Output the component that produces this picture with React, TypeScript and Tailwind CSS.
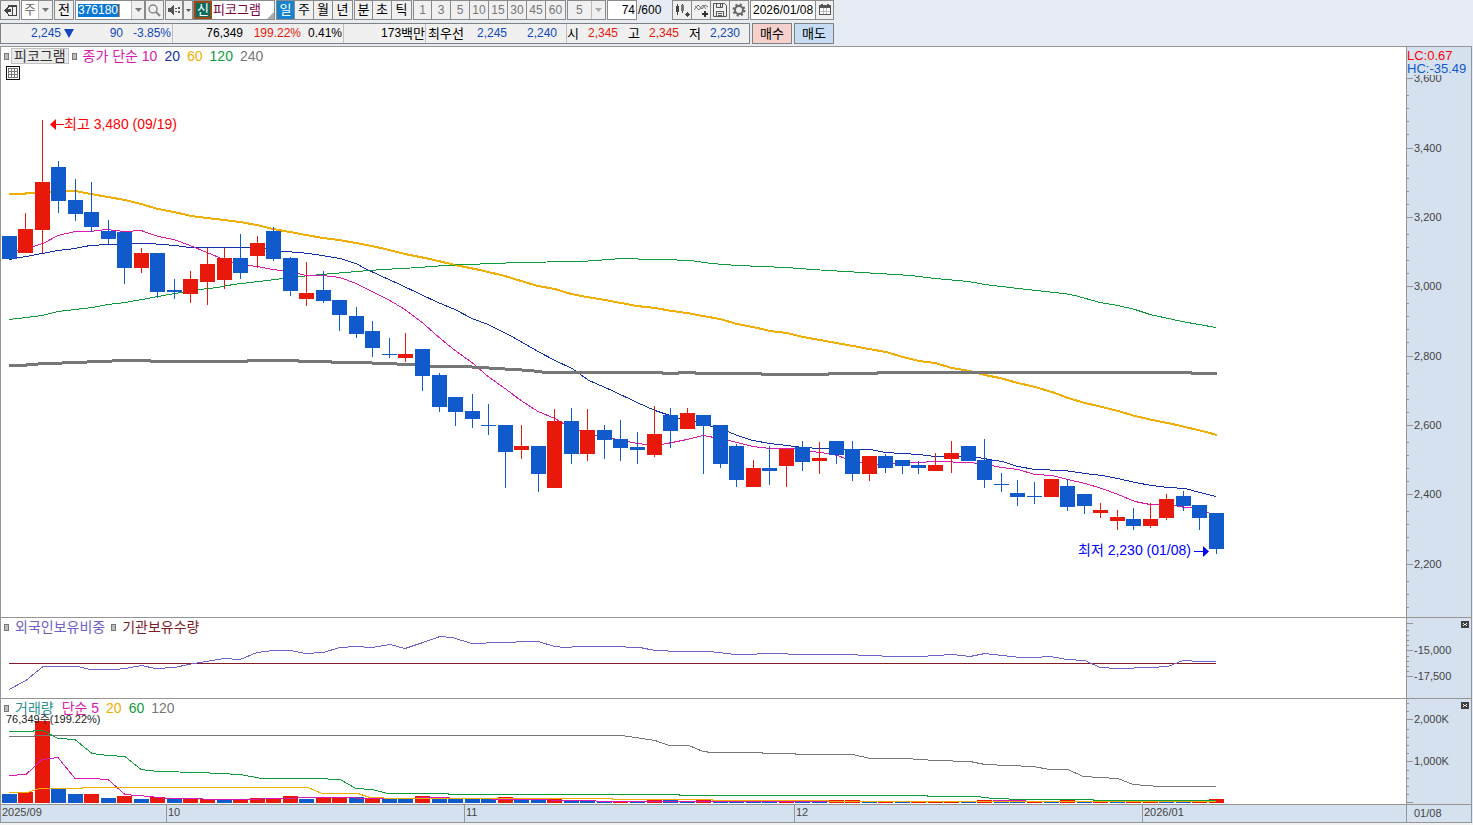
import React, { useState } from 'react';

type Candle = {
  up: boolean;
  high: number;
  top: number;
  bottom: number;
  low: number;
};

const UP = '#e8190a';
const DOWN = '#115acb';
const AXIS = '#959595';

const STEP = 16.54;
const candleX = (i: number) => Math.floor(9 + i * STEP);

// colour, high, body top, body bottom, low
const rawCandles: [string, number, number, number, number][] = [
  ['d', 236, 236, 259, 259], ['u', 213, 229, 253, 253], ['u', 120, 182, 230, 253], ['d', 161, 167, 201, 213],
  ['d', 179, 200, 214, 221], ['d', 182, 212, 227, 232], ['d', 220, 231, 239, 244], ['d', 232, 232, 268, 284],
  ['u', 248, 253, 268, 273], ['d', 253, 253, 292, 298], ['d', 279, 290, 292, 299], ['u', 271, 279, 294, 303],
  ['u', 248, 264, 282, 305], ['u', 248, 258, 280, 289], ['d', 234, 258, 273, 279], ['u', 236, 243, 256, 268],
  ['d', 227, 231, 259, 261], ['d', 257, 258, 291, 296], ['u', 262, 293, 299, 306], ['d', 271, 290, 301, 303],
  ['d', 300, 300, 315, 331], ['d', 307, 316, 334, 338], ['d', 321, 331, 348, 357], ['d', 338, 354, 355, 358],
  ['u', 333, 354, 358, 362], ['d', 349, 349, 376, 391], ['d', 373, 375, 407, 412], ['d', 397, 397, 412, 426],
  ['d', 394, 411, 419, 428], ['d', 404, 425, 426, 435], ['d', 425, 425, 452, 488], ['u', 425, 446, 450, 459],
  ['d', 446, 446, 474, 492], ['u', 409, 421, 488, 488], ['d', 408, 421, 454, 464], ['u', 409, 430, 454, 461],
  ['d', 425, 430, 440, 459], ['d', 420, 439, 448, 461], ['d', 432, 447, 450, 464], ['u', 406, 434, 455, 457],
  ['d', 408, 415, 431, 448], ['u', 408, 413, 429, 429], ['d', 415, 415, 426, 474], ['d', 425, 425, 464, 468],
  ['d', 444, 446, 480, 487], ['u', 460, 468, 487, 487], ['d', 446, 468, 471, 485], ['u', 449, 449, 466, 487],
  ['d', 441, 447, 462, 471], ['u', 442, 458, 461, 474], ['d', 441, 441, 455, 464], ['d', 441, 449, 474, 481],
  ['u', 456, 456, 474, 481], ['d', 454, 456, 468, 473], ['d', 460, 460, 466, 474], ['d', 461, 465, 468, 474],
  ['u', 453, 465, 471, 471], ['u', 441, 453, 459, 473], ['d', 446, 446, 461, 461], ['d', 439, 460, 480, 488],
  ['d', 473, 484, 485, 492], ['d', 480, 493, 497, 506], ['d', 482, 496, 497, 504], ['u', 479, 479, 497, 497],
  ['d', 479, 486, 507, 511], ['d', 494, 494, 506, 514], ['u', 503, 510, 513, 518], ['u', 510, 517, 521, 530],
  ['d', 508, 519, 526, 530], ['u', 503, 519, 526, 528], ['u', 494, 499, 518, 520], ['d', 491, 496, 506, 511],
  ['d', 505, 505, 518, 530], ['d', 513, 513, 549, 554],
];

const candles: Candle[] = rawCandles.map(([c, high, top, bottom, low]) => ({
  up: c === 'u',
  high,
  top,
  bottom,
  low,
}));

const volumeTops = [
  794, 792, 721, 789, 794, 794, 798, 796, 799, 797, 799, 799, 799, 799, 799, 798, 798, 796, 799,
  797, 797, 797, 799, 799, 799, 796, 798, 799, 799, 799, 797, 799, 799, 799, 801, 801, 801, 801,
  801, 800, 800, 801, 800, 801, 801, 801, 801, 801, 801, 801, 800, 800, 802, 802, 802, 802, 802,
  802, 802, 800, 802, 802, 802, 802, 800, 802, 802, 802, 802, 802, 802, 802, 802, 799,
];

// days on which the volume rose
const volumeUpDays = [
  1, 2, 5, 7, 9, 11, 12, 14, 15, 16, 17, 19, 20, 22, 25, 30, 33, 37, 39, 42, 47, 50, 51, 53, 55,
  56, 57, 59, 62, 64, 66, 68, 69, 72, 73,
];

const priceLines = [
  {
    color: '#f0ae00',
    width: 2,
    points:
      '9,194 25,194 26,193 50,192 62,191 75,191 91,194 108,197 125,200 141,204 158,209 174,212 191,216 207,218 224,220 240,222 257,225 273,229 290,232 306,235 323,238 339,240 356,243 372,246 389,250 405,254 430,259 455,265 480,270 488,272 505,276 521,281 538,286 555,289 571,294 587,297 605,300 621,303 637,306 655,308 672,311 687,313 703,316 720,319 737,324 753,327 770,331 787,333 803,337 820,340 853,346 869,349 886,352 903,357 919,361 935,363 952,368 970,371 985,375 1000,378 1018,383 1035,387 1052,392 1068,398 1085,403 1102,407 1118,411 1135,416 1152,420 1168,423 1185,427 1202,431 1217,435',
  },
  {
    color: '#0f9b3c',
    width: 1,
    points:
      '9,319 26,317 42,315 58,311 75,309 92,307 108,304 125,302 142,299 158,296 175,293 200,289 218,287 233,284 250,282 267,280 283,278 310,275 333,273 357,271 383,269 420,267 430,266 464,264 497,263 515,262 580,261 596,260 621,258 655,259 663,259 690,260 712,263 737,265 762,266 786,267 812,269 862,272 911,275 935,278 968,281 985,284 1018,288 1064,293 1075,295 1100,302 1118,305 1135,309 1150,314 1182,321 1216,327',
  },
  {
    color: '#1430a8',
    width: 1,
    points:
      '9,259 26,256 42,253 58,250 75,248 90,245 108,244 125,244 132,243 150,243 175,245 190,247 248,247 270,248 283,251 300,252 316,254 340,258 356,263 365,268 380,275 400,284 421,294 438,302 455,309 472,318 488,324 512,336 538,351 555,360 572,368 589,380 612,390 637,402 655,410 670,415 680,418 700,422 712,426 728,431 737,435 753,440 770,443 787,445 803,447 820,448 850,449 870,449 886,452 919,454 935,456 968,456 978,457 995,460 1002,461 1018,466 1035,469 1065,470 1085,473 1102,475 1118,478 1135,482 1152,485 1168,487 1185,488 1200,492 1216,496',
  },
  {
    color: '#d81ab0',
    width: 1,
    points:
      '9,252 33,246 43,243 58,235 75,231 90,231 106,229 125,231 141,230 158,236 174,239 190,245 207,252 224,259 240,264 257,266 273,269 290,271 306,275 323,275 340,277 356,283 372,291 388,299 405,309 421,321 438,336 455,350 472,362 488,376 505,388 521,400 538,411 555,418 570,427 590,434 612,438 628,441 637,443 655,445 662,444 672,442 687,439 703,435 720,438 737,442 753,446 770,448 787,448 803,449 812,451 828,453 838,455 845,458 862,462 880,464 900,463 935,461 970,462 985,464 1002,467 1018,469 1035,474 1052,475 1068,479 1085,483 1102,488 1118,494 1135,501 1150,504 1170,504 1185,507 1200,508 1210,513 1216,516',
  },
  {
    color: '#777777',
    width: 3,
    points:
      '9,365 26,365 27,364 50,363 75,362 100,361 125,360 150,360 151,361 247,361 248,360 298,360 299,361 331,361 332,362 364,362 380,363 413,364 430,366 463,366 480,367 497,368 513,369 530,370 546,372 662,372 663,373 678,373 679,372 695,372 696,373 761,373 762,374 828,374 829,373 877,373 878,372 1191,372 1192,373 1217,373',
  },
];

const holdingLines = [
  { color: '#801c28', width: 1, points: '9,663 1216,663' },
  {
    color: '#7060c8',
    width: 1,
    points:
      '9,689 26,680 43,666 78,666 90,669 115,669 125,668 142,665 155,668 175,667 188,664 200,662 224,658 240,659 257,652 273,650 290,650 306,653 323,652 340,647 356,646 372,647 390,644 405,648 423,642 440,636 452,637 472,643 478,643 495,642 538,641 555,646 565,647 580,646 612,646 640,647 655,650 680,651 710,651 735,654 780,653 795,654 845,654 870,655 894,656 920,656 952,654 970,656 985,653 1002,655 1020,657 1035,657 1050,656 1067,659 1085,660 1100,667 1118,668 1150,667 1168,666 1183,660 1200,661 1216,661',
  },
];

const volumeLines = [
  {
    color: '#777777',
    width: 1,
    points:
      '9,736 34,736 35,735 622,735 655,740 669,745 689,745 703,751 712,752 762,752 763,753 795,753 796,754 853,754 870,758 905,758 935,760 970,761 985,764 1033,766 1050,769 1068,769 1083,776 1118,778 1133,784 1160,786 1216,786',
  },
  {
    color: '#0f9b3c',
    width: 1,
    points:
      '9,731 33,731 34,730 43,730 58,738 75,739 92,753 108,755 125,756 141,769 158,771 200,772 240,774 262,778 315,778 340,779 356,788 372,789 388,793 448,793 449,794 679,794 680,795 927,795 928,796 977,796 993,798 1025,799 1093,799 1094,800 1216,800',
  },
  {
    color: '#d81ab0',
    width: 1,
    points:
      '9,775 26,774 42,759 58,757 75,778 92,778 108,779 125,794 150,796 166,798 240,799 315,797 398,798 440,797 460,798 580,800 612,801 993,801 994,800 1025,800 1026,801 1216,801',
  },
  {
    color: '#f0ae00',
    width: 1,
    points:
      '9,792 27,792 40,788 82,788 83,787 308,787 322,793 358,793 370,797 398,798 612,798 613,799 712,799 713,800 828,800 829,801 1216,801',
  },
];

type Tick = { y: number; label?: string };

const priceLabels: [number, string][] = [
  [78, '3,600'], [148, '3,400'], [217, '3,200'], [286, '3,000'],
  [356, '2,800'], [425, '2,600'], [494, '2,400'], [564, '2,200'],
];
const priceTicks: Tick[] = priceLabels.flatMap(([y, label]) => [
  { y, label },
  ...[17, 30, 43, 56].filter((d) => y + d < 615).map((d) => ({ y: y + d })),
]);

const holdingTicks: Tick[] = [
  { y: 623, label: '' }, { y: 630 }, { y: 635 }, { y: 640 }, { y: 645 }, { y: 650, label: '-15,000' },
  { y: 656 }, { y: 661 }, { y: 666 }, { y: 671 }, { y: 676, label: '-17,500' },
];

const volumeTicks: Tick[] = [
  { y: 703 }, { y: 711 }, { y: 719, label: '2,000K' }, { y: 729 }, { y: 737 }, { y: 745 }, { y: 753 },
  { y: 761, label: '1,000K' }, { y: 770 }, { y: 778 }, { y: 786 }, { y: 794 }, { y: 802, label: '' },
];

const months: [number, string][] = [
  [166, '10'], [464, '11'], [794, '12'], [1142, '2026/01'],
];

const Lines: React.FC<{ lines: typeof priceLines }> = ({ lines }) => (
  <>
    {lines.map((line) => (
      <polyline
        key={line.color}
        points={line.points}
        fill="none"
        stroke={line.color}
        strokeWidth={line.width}
        transform={line.width === 2 ? undefined : 'translate(0 0.5)'}
        shapeRendering="crispEdges"
      />
    ))}
  </>
);

const Axis: React.FC<{ ticks: Tick[]; top: number; children?: React.ReactNode }> = ({
  ticks,
  top,
  children,
}) => (
  <div className="relative w-[66px] shrink-0 border-x border-[#959595] bg-[#d6e1ef]">
    <svg className="absolute inset-0 h-full w-full" aria-hidden="true">
      <g transform={`translate(0 ${-top})`}>
        {ticks.map((tick) => (
          <g key={tick.y}>
            <rect x="0" y={tick.y} width={tick.label === undefined ? 2 : 6} height="1" fill={AXIS} />
            {tick.label && (
              <text x="7" y={tick.y + 4} fontSize="11" fill="#444444">
                {tick.label}
              </text>
            )}
          </g>
        ))}
      </g>
    </svg>
    {children}
  </div>
);

const CloseButton: React.FC<{ label: string }> = ({ label }) => (
  <button
    aria-label={label}
    className="absolute right-[2px] top-[3px] flex h-[7px] w-2 items-center justify-center bg-[#404040]"
  >
    <svg width="4" height="3" shapeRendering="crispEdges">
      <path d="M0 0h1v1h-1zM3 0h1v1h-1zM1 1h2v1h-2zM0 2h1v1h-1zM3 2h1v1h-1z" fill="#fff" />
    </svg>
  </button>
);

const Marker = () => <span className="h-[7px] w-[5px] border border-[#777] bg-[#bbb]" />;

const ToolButton: React.FC<{
  label?: string;
  className: string;
  children: React.ReactNode;
}> = ({ label, className, children }) => (
  <button
    aria-label={label}
    className={`flex h-5 items-center justify-center border border-[#8a8a8a] bg-[#f0f0f0] ${className}`}
  >
    {children}
  </button>
);

const Arrow: React.FC<{ color?: string }> = ({ color = '#777' }) => (
  <svg width="7" height="4" aria-hidden="true">
    <path d="M0 0h7L3.500 4z" fill={color} />
  </svg>
);

const Segments: React.FC<{
  items: string[];
  active?: string;
  muted?: boolean;
  onSelect: (item: string) => void;
}> = ({ items, active, muted, onSelect }) => (
  <div className="flex h-5 divide-x divide-[#8a8a8a] border border-[#8a8a8a]">
    {items.map((item) => (
      <button
        key={item}
        onClick={() => onSelect(item)}
        className={`w-[19px] text-center first:w-[18px] ${
          muted ? 'text-[12px] text-[#777]' : 'text-[13px]'
        } ${item === active ? 'bg-[#1583cd] text-white' : 'bg-[#f0f0f0]'}`}
      >
        {item}
      </button>
    ))}
  </div>
);

const Toolbar = () => {
  const [period, setPeriod] = useState('일');
  return (
    <div className="flex h-5 items-center text-[12px] leading-[18px] text-black">
      <ToolButton label="패널 열기" className="w-5">
        <svg width="13" height="13" shapeRendering="crispEdges">
          <path d="M4 1h9v2H4zM4 11h9v1H4zM12 1h1v11h-1zM8 3h1v8H8zM4 3h1v1H4zM4 10h1v1H4z" fill="#444" />
          <path d="M0 6h1v1H0zM1 5h1v3H1zM2 4h1v5H2zM3 3h1v7H3zM4 5h3v3H4z" fill="#444" />
        </svg>
      </ToolButton>
      <label className="relative ml-px flex h-5 w-8 border border-[#8a8a8a] bg-white">
        <select aria-label="구분" className="w-full appearance-none pl-[2px] text-[13px] text-[#666]">
          <option>주</option>
        </select>
        <span className="pointer-events-none absolute inset-y-0 right-0 flex w-3.5 items-center justify-center border-l border-[#bbb] bg-[#f0f0f0]">
          <Arrow />
        </span>
      </label>
      <ToolButton className="ml-px w-5 text-[13px]">전</ToolButton>
      <div className="ml-px flex h-5 w-[70px] border border-[#8a8a8a] bg-white">
        <div className="flex flex-1 items-center px-[2px]">
          <input
            aria-label="종목코드"
            defaultValue="376180"
            className="h-[13px] w-[42px] border-r border-[#f08020] bg-[#0a78d7] text-white outline-none"
          />
        </div>
        <button aria-label="종목 목록" className="flex w-[13px] items-center justify-center border-l border-[#bbb] bg-[#f0f0f0]">
          <Arrow />
        </button>
      </div>
      <ToolButton label="검색" className="w-[19px]">
        <svg width="13" height="13" fill="none" stroke="#888">
          <circle cx="5" cy="5" r="4" strokeWidth="1.500" />
          <path d="M8 8l4 4" strokeWidth="2" />
        </svg>
      </ToolButton>
      <ToolButton label="소리" className="ml-px w-[18px]">
        <svg width="13" height="12" shapeRendering="crispEdges" fill="#555">
          <path d="M0 4h3V8H0zM3 3h1v6H3zM4 2h1v8H4zM5 1h1v10H5zM7 4h2v1H7zM7 7h2v1H7zM10 3h2v2h-2zM10 7h2v2h-2z" />
        </svg>
      </ToolButton>
      <ToolButton label="소리 설정" className="w-[10px]">
        <svg width="5" height="3">
          <path d="M0 0h5L2.500 3z" fill="#555" />
        </svg>
      </ToolButton>
      <div className="flex h-5 w-[82px] border border-[#8a8a8a] bg-white text-[13px]">
        <span className="flex h-full w-[18px] items-center justify-center border-2 border-[#9a4a10] bg-[#0d6b60] text-white">
          신
        </span>
        <span className="pl-px text-[#7a0040]">피코그램</span>
        <svg className="ml-auto self-end" width="7" height="7" aria-hidden="true">
          <path d="M7 0v7H0z" fill="#aaa" />
        </svg>
      </div>
      <div className="ml-px flex">
        <Segments items={['일', '주', '월', '년']} active={period} onSelect={setPeriod} />
        <div className="w-px" />
        <Segments items={['분', '초', '틱']} active={period} onSelect={setPeriod} />
        <div className="w-px" />
        <Segments items={['1', '3', '5', '10', '15', '30', '45', '60']} active={period} muted onSelect={setPeriod} />
      </div>
      <label className="relative ml-px flex h-5 w-[39px] border border-[#8a8a8a] bg-[#f0f0f0]">
        <select aria-label="분 단위" className="w-full appearance-none pl-2 text-[#777]">
          <option>5</option>
        </select>
        <span className="pointer-events-none absolute inset-y-0 right-0 flex w-3.5 items-center justify-center border-l border-[#bbb]">
          <Arrow color="#aaa" />
        </span>
      </label>
      <input
        aria-label="표시 개수"
        defaultValue="74"
        className="ml-px h-5 w-[30px] border border-[#8a8a8a] bg-white pr-px text-right outline-none"
      />
      <span className="ml-px w-[34px]">/600</span>
      <ToolButton label="차트 추가" className="w-5">
        <svg width="15" height="15" shapeRendering="crispEdges" fill="#444">
          <path d="M2 1h1v11H2zM1 3h3v6H1zM7 1h1v9H7z" />
          <path d="M6 2h3v6H6z" fill="#777" />
          <path d="M12 9h1v5h-1zM10 11h5v1h-5zM11 10h3v3h-3z" />
        </svg>
      </ToolButton>
      <ToolButton label="지표 추가" className="-ml-px w-5">
        <svg width="15" height="15" fill="none" stroke="#777">
          <path d="M0 7L4 2l4 4 3-4 3 2M1 3l4 4 4-5 3 4" />
          <path d="M8 11h6M11 8v6" stroke="#333" strokeWidth="2" />
        </svg>
      </ToolButton>
      <ToolButton label="저장" className="-ml-px w-5">
        <svg width="14" height="14" fill="none" stroke="#555">
          <path d="M.5.5h11l2 2v11H.5zM3.500.5v4h6v-4M7.500 1v3M3.500 13.500v-5h7v5M5 10.500h4M5 12.500h4" />
        </svg>
      </ToolButton>
      <ToolButton label="설정" className="-ml-px w-5">
        <svg width="14" height="14" fill="none" stroke="#666">
          <circle cx="7" cy="7" r="4" strokeWidth="2" />
          <circle cx="7" cy="7" r="5.500" strokeWidth="2" strokeDasharray="2.160 2.160" />
        </svg>
      </ToolButton>
      <div className="ml-px flex h-5 w-[84px] border border-[#8a8a8a] bg-white">
        <input aria-label="조회일" defaultValue="2026/01/08" className="w-[64px] pl-[2px] outline-none" />
        <button aria-label="달력" className="flex flex-1 items-center justify-center border-l border-[#8a8a8a] bg-[#f0f0f0]">
          <svg width="12" height="12" shapeRendering="crispEdges">
            <path d="M0 1h12v10H0z" fill="#555" />
            <path d="M1 4h10v6H1z" fill="#fff" />
            <path d="M4 4h1v6H4zM7 4h1v6H7zM1 7h10v1H1z" fill="#bbb" />
            <path d="M2 0h2v2H2zM8 0h2v2H8z" fill="#555" />
          </svg>
        </button>
      </div>
    </div>
  );
};

const Quote: React.FC<{ label: string; value: string; color: string }> = ({ label, value, color }) => (
  <span className="flex w-[51px] justify-between">
    <span className="text-[13px]">{label}</span>
    <span className={color}>{value}</span>
  </span>
);

const QuoteBar = () => (
  <div className="mt-[3px] flex h-[21px] text-[12px] leading-[19px] text-black">
    <div className="flex border border-[#808080] bg-[#f0f0f0] text-right whitespace-nowrap">
      <div className="flex w-[172px] border-r border-[#c0c0c0] text-[#1048c0]">
        <span className="flex w-[73px] items-center justify-end gap-[3px]">
          2,245
          <svg width="10" height="9" role="img" aria-label="하락">
            <path d="M0 0h10L5 9z" fill="#1048c0" />
          </svg>
        </span>
        <span className="w-[49px]">90</span>
        <span className="w-12">-3.85%</span>
      </div>
      <div className="flex w-[171px] border-r border-[#c0c0c0]">
        <span className="w-[70px]">76,349</span>
        <span className="w-[58px] text-[#e8190a]">199.22%</span>
        <span className="w-[41px]">0.41%</span>
      </div>
      <div className="flex w-[82px] justify-end border-r border-[#c0c0c0]">
        173<span className="text-[13px]">백만</span>
      </div>
      <div className="flex w-[141px] border-r border-[#c0c0c0] pl-[2px] text-[#1048c0]">
        <span className="w-[37px] text-left text-[13px] text-black">최우선</span>
        <span className="w-[42px]">2,245</span>
        <span className="w-[50px]">2,240</span>
      </div>
      <div className="flex w-[182px] gap-[10px]">
        <Quote label="시" value="2,345" color="text-[#e8190a]" />
        <Quote label="고" value="2,345" color="text-[#e8190a]" />
        <Quote label="저" value="2,230" color="text-[#1048c0]" />
      </div>
    </div>
    <button className="ml-[2px] w-10 border border-[#808080] bg-[#f6d0ca] text-[13px]">매수</button>
    <button className="ml-[2px] w-10 border border-[#808080] bg-[#c6ddf3] text-[13px]">매도</button>
  </div>
);

const PricePanel = () => (
  <div className="flex min-h-[570px] flex-1">
    <div className="relative flex-1">
      <svg className="absolute inset-0 h-full w-full" role="img" aria-label="일봉 차트">
        <g transform="translate(-1 -47)">
          <Lines lines={priceLines} />
          <g shapeRendering="crispEdges">
            {candles.map((c, i) => {
              const x = candleX(i);
              return (
                <g key={i} fill={c.up ? UP : DOWN}>
                  <rect x={x} y={c.high} width="1" height={c.low - c.high} />
                  <rect x={x - 7} y={c.top} width="15" height={c.bottom - c.top} />
                </g>
              );
            })}
          </g>
          <path d="M50 124.500l6-5.500v5h8v1h-8v5z" fill="#ff0000" />
          <text x="64" y="129" fontSize="14" fill="#ff0000">
            최고 3,480 (09/19)
          </text>
          <text x="1078" y="555" fontSize="14" fill="#0000ff">
            최저 2,230 (01/08)
          </text>
          <path d="M1209 551.500l-6-5.500v5h-9v1h9v5z" fill="#0000ff" />
        </g>
      </svg>
      <div className="absolute left-[3px] top-px flex items-center text-[14px] leading-[14px]">
        <Marker />
        <span className="ml-[2px] border border-[#c0c0c0] bg-[#ebebeb] px-[2px] text-[#333]">피코그램</span>
        <span className="ml-[3px] flex">
          <Marker />
        </span>
        <span className="ml-[6px] text-[#d81ab0]">종가 단순 10</span>
        <span className="ml-[7px] text-[#1430a8]">20</span>
        <span className="ml-[7px] text-[#f0ae00]">60</span>
        <span className="ml-[7px] text-[#0f9b3c]">120</span>
        <span className="ml-[7px] text-[#777]">240</span>
      </div>
      <button aria-label="표 보기" className="absolute left-[5px] top-[19px]">
        <svg width="14" height="14" shapeRendering="crispEdges">
          <path d="M0 0h14v14H0z" fill="#111" />
          <path d="M1 1h12v12H1z" fill="#fff" />
          <path d="M2 2h10v10H2z" fill="#777" />
          <path d="M3 3h2v2H3zM6 3h2v2H6zM9 3h2v2H9zM3 6h2v2H3zM6 6h2v2H6zM9 6h2v2H9zM3 9h2v2H3zM6 9h2v2H6zM9 9h2v2H9z" fill="#fff" />
        </svg>
      </button>
    </div>
    <Axis ticks={priceTicks} top={47}>
      <div className="absolute left-0 top-[2px] w-full bg-[#d6e1ef] text-[13px] leading-[13px] whitespace-nowrap">
        <div className="text-[#ff0000]">LC:0.67</div>
        <div className="text-[#1058d0]">HC:-35.49</div>
      </div>
    </Axis>
  </div>
);

const HoldingPanel = () => (
  <div className="flex h-[81px] border-t border-[#959595]">
    <div className="relative flex-1">
      <svg className="absolute inset-0 h-full w-full" role="img" aria-label="보유 추이">
        <g transform="translate(-1 -618)">
          <Lines lines={holdingLines} />
        </g>
      </svg>
      <div className="absolute left-[3px] top-[2px] flex items-center text-[14px] leading-[14px]">
        <Marker />
        <span className="ml-[6px] text-[#7060c8]">외국인보유비중</span>
        <span className="ml-[6px] flex">
          <Marker />
        </span>
        <span className="ml-[6px] text-[#801c28]">기관보유수량</span>
      </div>
    </div>
    <Axis ticks={holdingTicks} top={618}>
      <CloseButton label="보유 지표 닫기" />
    </Axis>
  </div>
);

const VolumePanel = () => (
  <div className="flex h-[106px] border-t border-[#959595]">
    <div className="relative flex-1">
      <svg className="absolute inset-0 h-full w-full" role="img" aria-label="거래량">
        <g transform="translate(-1 -699)">
          <g shapeRendering="crispEdges">
            {volumeTops.map((y, i) => (
              <rect
                key={i}
                x={candleX(i) - 7}
                y={y}
                width="15"
                height={803 - y}
                fill={volumeUpDays.includes(i) ? UP : DOWN}
              />
            ))}
          </g>
          <Lines lines={volumeLines} />
          <text x="6" y="723" fontSize="11" fill="#222">
            76,349주(199.22%)
          </text>
        </g>
      </svg>
      <div className="absolute left-[3px] top-[2px] flex items-center text-[14px] leading-[14px]">
        <Marker />
        <span className="ml-[6px] text-[#30908e]">거래량</span>
        <span className="ml-2 text-[#d81ab0]">단순 5</span>
        <span className="ml-[7px] text-[#f0ae00]">20</span>
        <span className="ml-[7px] text-[#0f9b3c]">60</span>
        <span className="ml-[7px] text-[#777]">120</span>
      </div>
    </div>
    <Axis ticks={volumeTicks} top={699}>
      <CloseButton label="거래량 닫기" />
    </Axis>
  </div>
);

const DateAxis = () => (
  <div className="flex h-[19px] border-y border-[#959595] bg-[#d6e1ef] text-[11px] leading-4 text-[#444]">
    <svg className="h-full flex-1" role="img" aria-label="날짜 축">
      <text x="1" y="11" fontSize="11" fill="#444">
        2025/09
      </text>
      {months.map(([x, label]) => (
        <g key={label}>
          <rect x={x - 1} y="0" width="1" height="17" fill={AXIS} />
          <text x={x + 1} y="11" fontSize="11" fill="#444">
            {label}
          </text>
        </g>
      ))}
    </svg>
    <div className="w-[66px] border-x border-[#959595] pl-[7px]">01/08</div>
  </div>
);

const App: React.FC = () => (
  <div className="flex min-h-screen flex-col bg-[#e6ebf4] font-['Liberation_Sans','Noto_Sans_CJK_KR',sans-serif]">
    <Toolbar />
    <QuoteBar />
    <main className="mt-[2px] mr-px flex flex-1 flex-col border-l border-t border-[#959595] bg-white">
      <PricePanel />
      <HoldingPanel />
      <VolumePanel />
      <DateAxis />
    </main>
    <div className="h-[2px] bg-[#f2f2f2]" />
  </div>
);

export default App;
